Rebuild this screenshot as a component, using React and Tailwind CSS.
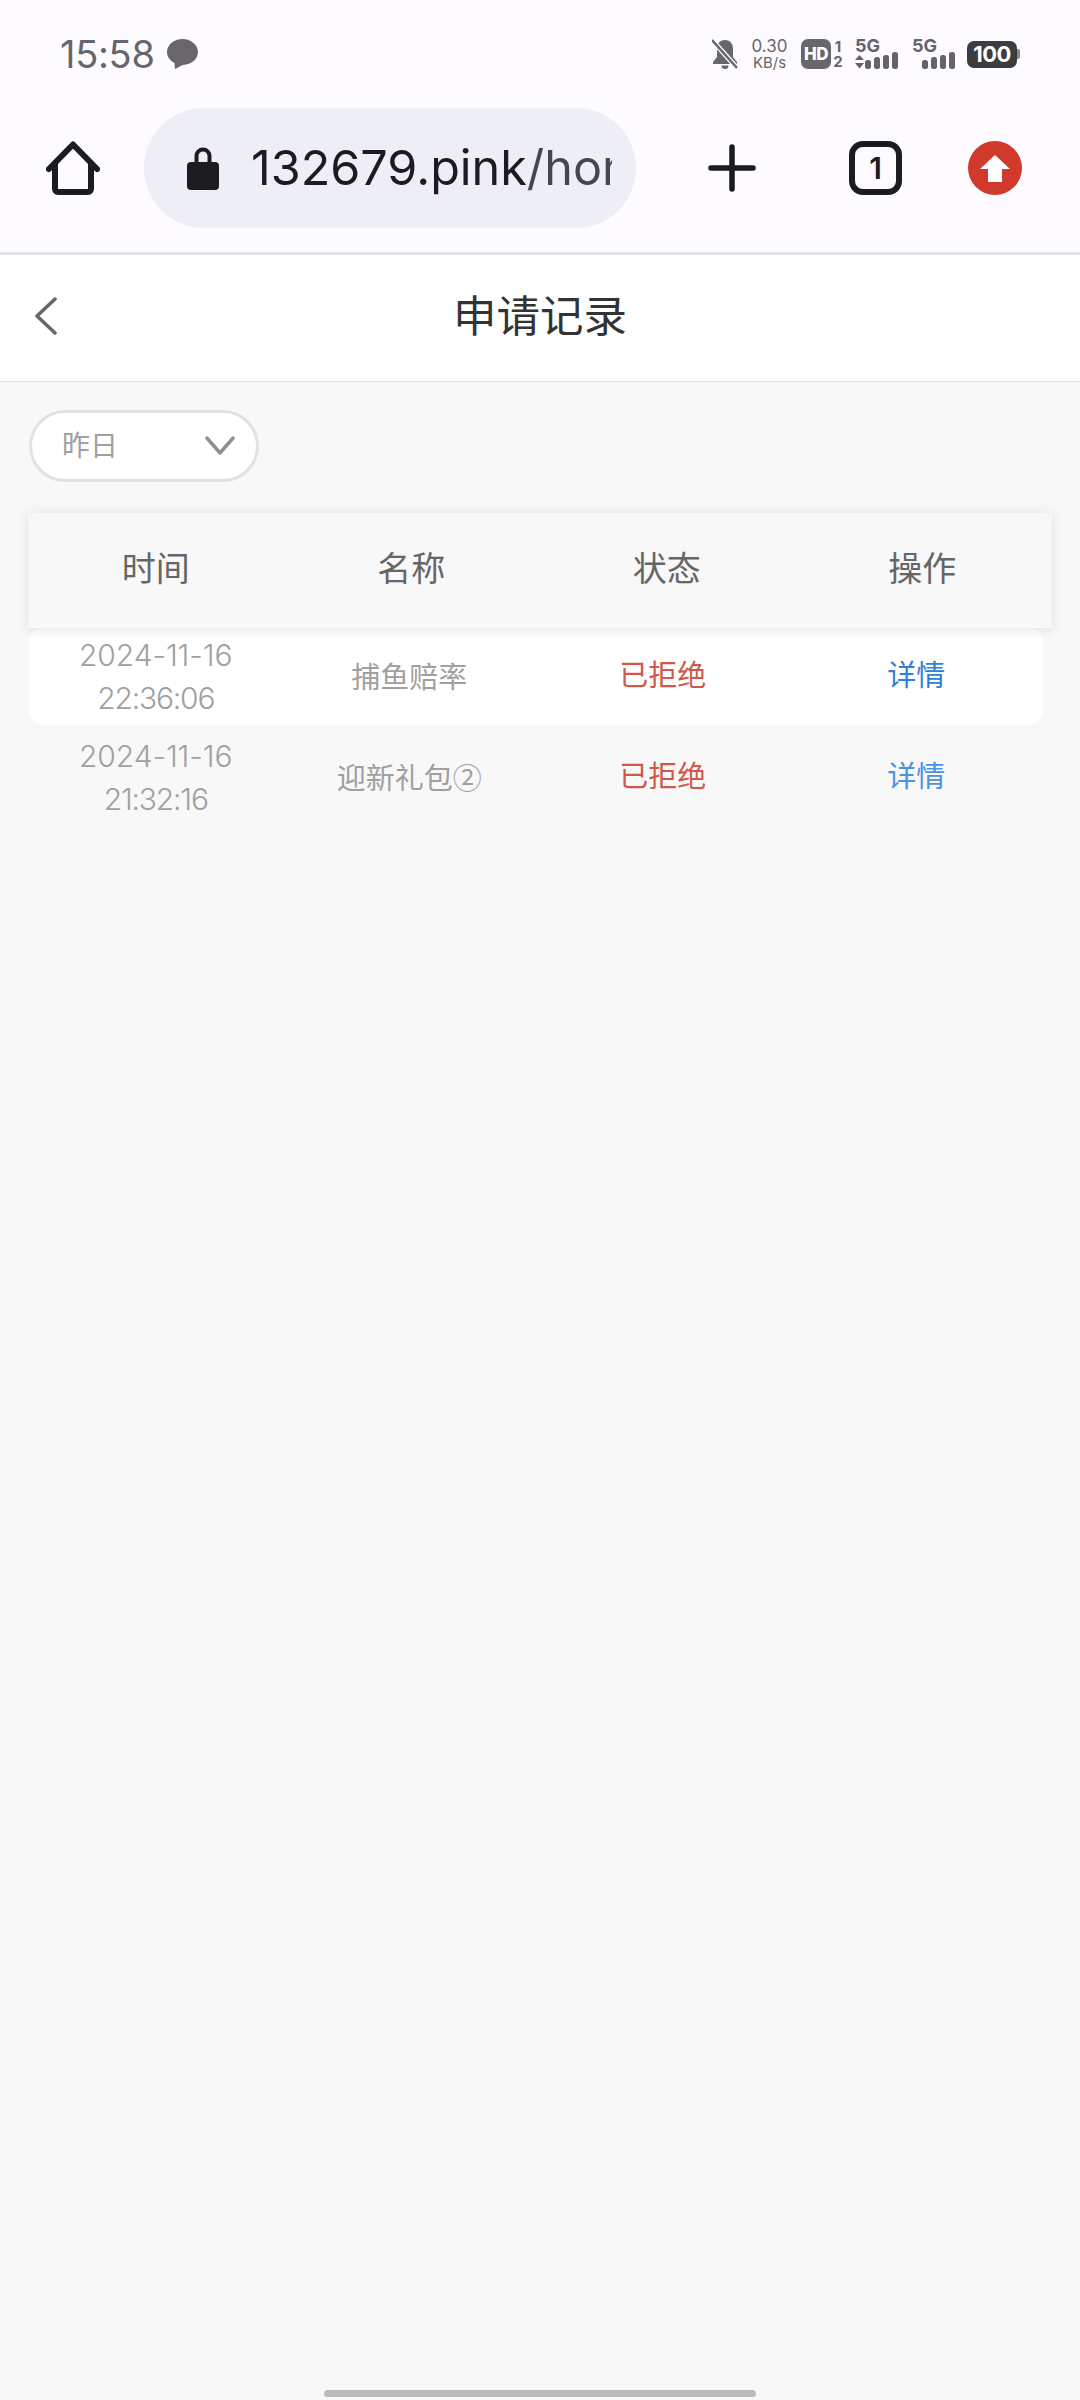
import React from 'react'

const SANS = 'font-["Inter","Noto_Sans_CJK_SC",sans-serif]'

const RECORDS = [
  { date: '2024-11-16', time: '22:36:06', name: '捕鱼赔率', link: 'text-[#2f7fd6]', bg: 'bg-white' },
  { date: '2024-11-16', time: '21:32:16', name: '迎新礼包②', link: 'text-[#4a93e0]', bg: '' },
]

function Signal({ up }) {
  return (
    <div className="relative w-[44px] h-[31px]">
      <span className="absolute left-0 -top-[3px] text-[18px] leading-[20px] font-bold text-[#666468]">5G</span>
      <svg width="44" height="31" viewBox="0 0 44 31" className="absolute left-0 top-0" fill="#666468">
        {up && <path d="M0 21l4.500-5 4.500 5zM0 24h9l-4.500 5.500z" />}
        <rect x="10" y="21" width="6" height="9" rx="2.500" />
        <rect x="19" y="18" width="6" height="12" rx="2.500" />
        <rect x="28" y="16" width="6" height="14" rx="2.500" />
        <rect x="37" y="13" width="6" height="17" rx="2.500" />
      </svg>
    </div>
  )
}

function StatusBar() {
  return (
    <div className="flex items-center justify-between h-[108px] pl-[60px] pr-[60px]">
      <div className="flex items-center gap-[12px]">
        <span className="text-[38px] leading-none tracking-[-0.3px] text-[#68666b]">15:58</span>
        <svg width="31" height="30" viewBox="0 0 31 30" fill="#68666b">
          <path d="M15.500 0C7 0 0 5.800 0 13c0 4.700 3 8.700 7.500 11L8 30c3-1.500 5.500-3.500 8-4.100C24.500 25.600 31 20 31 13S24 0 15.500 0z" />
        </svg>
      </div>
      <div className="flex items-center">
        <svg width="26" height="30" viewBox="0 0 26 30" fill="#68666b" className="mr-[13px]">
          <path d="M13 1C7.500 1 5 5 5 10v8l-4 5v2h24v-2l-4-5v-8c0-5-2.500-9-8-9zM9.500 26.500a3.500 3.500 0 0 0 7 0z" />
          <path d="M0 1l25 28" stroke="#fdfbff" strokeWidth="5" />
          <path d="M0 1l25 28" stroke="#68666b" strokeWidth="2.500" />
        </svg>
        <div className="flex flex-col items-center w-[37px] mr-[13px] text-[#68666b]">
          <span className="text-[17px] leading-[17px]">0.30</span>
          <span className="text-[15px] leading-[15px]">KB/s</span>
        </div>
        <div className="flex items-center justify-center w-[30px] h-[30px] rounded-[7px] bg-[#68666b] text-white text-[17px] font-extrabold leading-none tracking-[-0.5px] mr-[2px]">HD</div>
        <div className="flex flex-col items-center w-[10px] mr-[12px] text-[#68666b] text-[15px] font-bold leading-[15px]">
          <span>1</span>
          <span>2</span>
        </div>
        <div className="mr-[13px]"><Signal up /></div>
        <div className="mr-[11px]"><Signal /></div>
        <div className="flex items-center">
          <div className="flex items-center justify-center w-[50px] h-[27px] rounded-[7px] bg-[#3d3c3f] text-white text-[22px] font-bold leading-none tracking-[-0.5px]">100</div>
          <span className="w-[3px] h-[10px] rounded-r-[2px] bg-[#8a888c]" />
        </div>
      </div>
    </div>
  )
}

function BrowserBar() {
  return (
    <div className="flex items-center h-[120px] pl-[46px]">
      <svg width="54" height="54" viewBox="0 0 54 54" fill="none" stroke="#1c1b20" strokeWidth="6" strokeLinecap="round" strokeLinejoin="round">
        <path d="M3 28L27 3.500 51 28" />
        <path d="M9 23v25a3 3 0 0 0 3 3h30a3 3 0 0 0 3-3V23" />
      </svg>
      <div className="flex items-center w-[492px] h-[120px] ml-[44px] pl-[43px] pr-[24px] rounded-full bg-[#eeeef6]">
        <svg width="32" height="44" viewBox="0 0 32 44" className="shrink-0">
          <path d="M9.500 18v-8a6.500 6.500 0 0 1 13 0v8" fill="none" stroke="#1c1b20" strokeWidth="4" />
          <rect x="0" y="16" width="32" height="28" rx="4" fill="#1c1b20" />
        </svg>
        <div className="ml-[32px] overflow-hidden whitespace-nowrap text-[48.500px] leading-[60px] text-[#1c1b20]">
          132679.pink<span className="text-[#46464f]">/home</span>
        </div>
      </div>
      <svg width="48" height="48" viewBox="0 0 48 48" className="ml-[72px]" stroke="#1c1b20" strokeWidth="5.500" strokeLinecap="round">
        <path d="M24 3v42M3 24h42" />
      </svg>
      <div className="flex items-center justify-center w-[53px] h-[54px] ml-[93px] rounded-[14px] border-[6px] border-[#1c1b20] text-[30px] font-semibold leading-none text-[#1c1b20]">1</div>
      <div className="flex items-center justify-center w-[54px] h-[54px] ml-[66px] rounded-full bg-[#d0392b]">
        <svg width="30" height="27" viewBox="0 0 30 27" fill="#fff">
          <path d="M15 0l15 14H22v13H8V14H0z" />
        </svg>
      </div>
    </div>
  )
}

function PageHeader() {
  return (
    <div className="relative flex items-center justify-center h-[127px] bg-white border-b border-[#e3e3e3]">
      <svg width="24" height="38" viewBox="0 0 24 38" fill="none" stroke="#666" strokeWidth="3.500" strokeLinecap="round" strokeLinejoin="round" className="absolute left-[34px] top-[42px]">
        <path d="M21 2L3 19l18 17" />
      </svg>
      <span className="text-[43.500px] leading-none -mt-[2px] text-[#333]">申请记录</span>
    </div>
  )
}

function DateSelect() {
  return (
    <div className="flex items-center justify-between w-[230px] h-[72px] ml-[29px] mt-[28px] pl-[30px] pr-[21px] rounded-full bg-white border-[3px] border-[#e2e2e2]">
      <span className="text-[28px] leading-none text-[#a0a0a0]">昨日</span>
      <svg width="30" height="20" viewBox="0 0 30 20" fill="none" stroke="#909090" strokeWidth="3.500" strokeLinecap="round" strokeLinejoin="round">
        <path d="M2 2l13 15L28 2" />
      </svg>
    </div>
  )
}

function RecordTable() {
  return (
    <div className="mx-[28px] mt-[31px]">
      <div className="relative z-10 grid grid-cols-4 items-center w-[1024px] h-[115px] pb-[4px] pr-[2px] bg-[#f8f8f8] text-center text-[34px] leading-none text-[#666] shadow-[0_2px_12px_rgba(0,0,0,0.1)]">
        <span>时间</span>
        <span>名称</span>
        <span>状态</span>
        <span>操作</span>
      </div>
      <div>
        {RECORDS.map((r) => (
          <div key={r.time} className={`grid grid-cols-4 items-center w-[1014px] h-[97px] ml-[1px] mb-[4px] rounded-[14px] text-center text-[29px] leading-none text-[#a0a0a0] ${r.bg}`}>
            <div className="text-[30px] leading-[43px] font-light">
              <div className="tracking-[-0.1px]">{r.date}</div>
              <div className="tracking-[-1.200px]">{r.time}</div>
            </div>
            <span className='-mt-[3px] font-["Noto_Sans_CJK_SC",sans-serif]'>{r.name}</span>
            <span className="-mt-[2px] text-[#d0584a]">已拒绝</span>
            <span className={`-mt-[2px] ${r.link}`}>详情</span>
          </div>
        ))}
      </div>
    </div>
  )
}

export default function App() {
  return (
    <div className={`relative w-[1080px] h-[2400px] overflow-hidden bg-[#f8f8f8] ${SANS}`}>
      <div className="h-[255px] bg-[#fdfbff] border-b-[3px] border-[#e4e3ea]">
        <StatusBar />
        <BrowserBar />
      </div>
      <PageHeader />
      <DateSelect />
      <RecordTable />
      <div className="absolute left-[324px] bottom-[3px] w-[432px] h-[7px] rounded-full bg-[#bbbbbb]" />
    </div>
  )
}
